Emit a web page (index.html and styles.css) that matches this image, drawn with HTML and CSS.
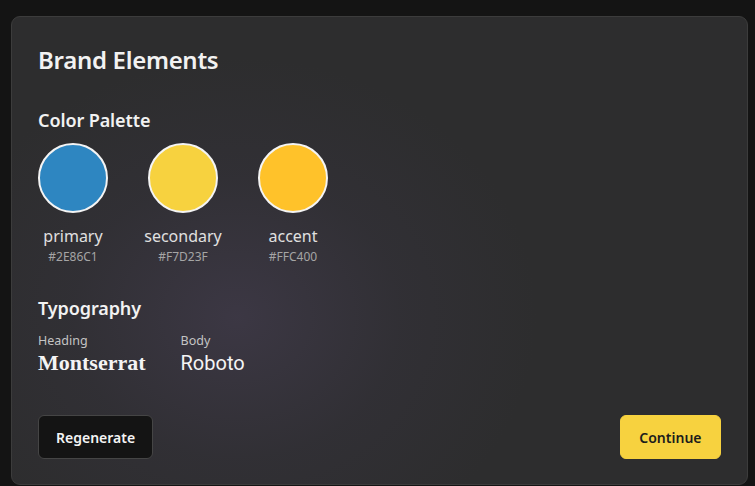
FILE: index.html
```html
<!DOCTYPE html>
<html>
<head>
<meta charset="utf-8">
<link rel="stylesheet" href="styles.css">
</head>
<body>
<div class="card">
  <h1 class="title">Brand Elements</h1>
  <section class="section">
    <h2 class="section-title">Color Palette</h2>
    <div class="palette">
      <div class="swatch">
        <div class="circle c-primary"></div>
        <div class="name">primary</div>
        <div class="hex">#2E86C1</div>
      </div>
      <div class="swatch">
        <div class="circle c-secondary"></div>
        <div class="name">secondary</div>
        <div class="hex">#F7D23F</div>
      </div>
      <div class="swatch">
        <div class="circle c-accent"></div>
        <div class="name">accent</div>
        <div class="hex">#FFC400</div>
      </div>
    </div>
  </section>
  <section class="section typo">
    <h2 class="section-title">Typography</h2>
    <div class="fonts">
      <div class="font">
        <div class="font-label">Heading</div>
        <div class="font-sample heading-font">Montserrat</div>
      </div>
      <div class="font">
        <div class="font-label">Body</div>
        <div class="font-sample body-font">Roboto</div>
      </div>
    </div>
  </section>
  <div class="actions">
    <button class="btn btn-dark">Regenerate</button>
    <button class="btn btn-yellow">Continue</button>
  </div>
</div>
</body>
</html>
```
FILE: styles.css
```css
* { box-sizing: border-box; }
html, body { height: 100%; }
body {
  margin: 0;
  padding: 16px 7px 1px 11px;
  background: #141414;
  font-family: "Noto Sans", "Open Sans", sans-serif;
  color: #f2f2f2;
  overflow: hidden;
}
.card {
  height: 469px;
  border: 1px solid #3c3c3c;
  border-radius: 9px;
  background:
    radial-gradient(ellipse 300px 260px at 225px 300px, rgba(72,64,86,0.55), rgba(60,55,72,0.25) 55%, rgba(45,45,45,0) 100%),
    #2d2d2e;
  padding: 26px 26px 25px 26px;
  display: flex;
  flex-direction: column;
}
.title {
  margin: 0;
  font-size: 24px;
  font-weight: 600;
  line-height: 34px;
  letter-spacing: -0.3px;
}
.section { margin-top: 31px; }
.section-title {
  margin: 0;
  font-size: 18px;
  font-weight: 600;
  line-height: 24px;
  letter-spacing: -0.1px;
}
.palette {
  display: flex;
  gap: 40px;
  margin-top: 11px;
}
.swatch {
  width: 70px;
  display: flex;
  flex-direction: column;
  align-items: center;
}
.circle {
  width: 70px;
  height: 70px;
  border-radius: 50%;
  border: 2px solid #f4f4f4;
}
.c-primary { background: #2E86C1; }
.c-secondary { background: #F7D23F; }
.c-accent { background: #FFC22A; }
.name {
  margin-top: 12px;
  font-size: 16px;
  line-height: 22px;
  color: #e0e0e0;
  white-space: nowrap;
}
.hex {
  font-size: 12px;
  line-height: 16px;
  color: #a5a5a5;
  margin-top: 2px;
}
.typo { margin-top: 31px; }
.fonts {
  display: flex;
  gap: 35px;
  margin-top: 12px;
}
.font-label {
  font-size: 12.5px;
  line-height: 17px;
  color: #c4c4c4;
}
.font-sample {
  margin-top: 1px;
  font-size: 20px;
  line-height: 26px;
  color: #f4f4f4;
}
.heading-font {
  font-family: "Liberation Serif", serif;
  font-weight: 700;
  font-size: 22px;
}
.body-font {
  font-family: Roboto, sans-serif;
}
.actions {
  margin-top: auto;
  display: flex;
  justify-content: space-between;
}
.btn {
  height: 44px;
  border-radius: 6px;
  font-family: "Noto Sans", sans-serif;
  font-size: 14px;
  font-weight: 600;
  padding: 0 17px;
  cursor: pointer;
}
.btn-dark {
  background: #141414;
  border: 1px solid #454545;
  color: #f4f4f4;
}
.btn-yellow {
  background: #F7D23F;
  border: 1px solid #F7D23F;
  color: #1c1c1c;
  padding: 0 18.5px;
}
```
